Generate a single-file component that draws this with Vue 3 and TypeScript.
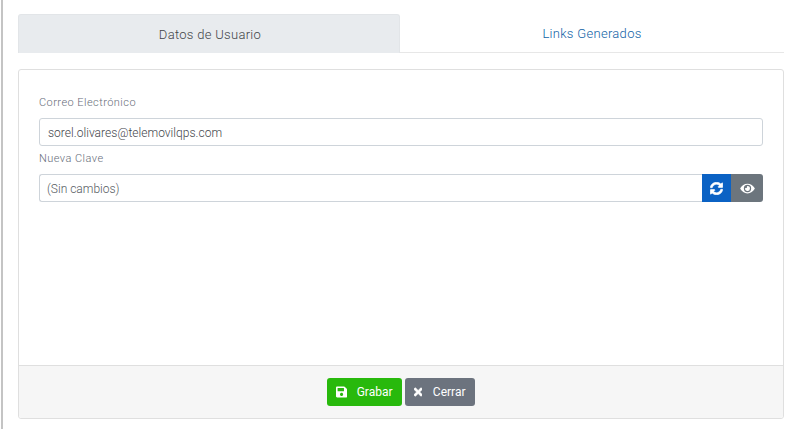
<script setup lang="ts">
const email = 'sorel.olivares@telemovilqps.com'
</script>

<template>
  <div class="page">
    <nav class="tabs">
      <a class="tab active">Datos de Usuario</a>
      <a class="tab link">Links Generados</a>
    </nav>
    <section class="card">
      <div class="body">
        <label class="label first">Correo Electrónico</label>
        <div class="input value">{{ email }}</div>
        <label class="label second">Nueva Clave</label>
        <div class="group">
          <div class="input placeholder">(Sin cambios)</div>
          <button class="addon blue" type="button" aria-label="Generar">
            <svg width="13" height="13" viewBox="0 0 512 512" fill="#fff" stroke="#fff" stroke-width="24"><path d="M370.7 133.3C339.5 104 298.9 88 255.800 88c-77.500.1-144.300 53.200-162.800 126.900-1.300 5.400-6.100 9.200-11.700 9.200H24.100c-7.500 0-13.200-6.800-11.800-14.200C33.900 94.900 134.800 8 256 8c66.400 0 126.800 26.100 171.300 68.700L463 41C478.100 25.900 504 36.600 504 57.900V192c0 13.300-10.700 24-24 24H345.900c-21.400 0-32.100-25.900-17-41l41.800-41.700zM32 296h134.100c21.400 0 32.100 25.900 17 41l-41.800 41.800c31.300 29.300 71.800 45.300 114.900 45.200 77.400-.1 144.300-53.100 162.800-126.800 1.300-5.400 6.100-9.200 11.700-9.200h57.300c7.500 0 13.200 6.800 11.800 14.200C478.100 417.100 377.200 504 256 504c-66.400 0-126.800-26.100-171.300-68.700L49 471C33.900 486.100 8 475.400 8 454.100V320c0-13.300 10.700-24 24-24z"/></svg>
          </button>
          <button class="addon gray" type="button" aria-label="Ver">
            <svg width="15" height="13" viewBox="0 0 576 512" fill="#fff"><path d="M572.500 241.400C518.300 135.600 410.900 64 288 64S57.700 135.600 3.500 241.400a32.400 32.400 0 0 0 0 29.200C57.700 376.400 165.100 448 288 448s230.300-71.600 284.500-177.400a32.400 32.400 0 0 0 0-29.200zM288 400a144 144 0 1 1 144-144 143.900 143.900 0 0 1-144 144zm0-240a95.300 95.300 0 0 0-25.300 3.800 47.900 47.900 0 0 1-66.900 66.900A95.800 95.800 0 1 0 288 160z"/></svg>
          </button>
        </div>
      </div>
      <footer class="foot">
        <button class="btn green" type="button">
          <svg width="12" height="14" viewBox="0 0 448 512" fill="#fff"><path d="M433.900 129.900l-83.900-83.900A48 48 0 0 0 316.100 32H48C21.500 32 0 53.500 0 80v352c0 26.500 21.500 48 48 48h352c26.500 0 48-21.500 48-48V163.900a48 48 0 0 0-14.100-34zM224 416c-35.300 0-64-28.700-64-64 0-35.300 28.700-64 64-64s64 28.700 64 64c0 35.300-28.700 64-64 64zm96-304.500V212c0 6.600-5.400 12-12 12H76c-6.600 0-12-5.400-12-12V108c0-6.600 5.400-12 12-12h228.500c3.200 0 6.200 1.300 8.500 3.500l3.500 3.500A12 12 0 0 1 320 111.500z"/></svg>
          <span>Grabar</span>
        </button>
        <button class="btn slate" type="button">
          <svg width="10" height="14" viewBox="0 0 352 512" fill="#fff" stroke="#fff" stroke-width="24"><path d="M242.700 256l100.100-100.100c12.300-12.300 12.300-32.200 0-44.500l-22.200-22.200c-12.300-12.300-32.200-12.300-44.500 0L176 189.300 75.900 89.200c-12.300-12.300-32.200-12.300-44.500 0L9.200 111.400c-12.300 12.300-12.300 32.200 0 44.500L109.300 256 9.200 356.100c-12.300 12.300-12.300 32.200 0 44.500l22.200 22.200c12.300 12.300 32.200 12.300 44.500 0L176 322.700l100.100 100.100c12.300 12.300 32.200 12.300 44.500 0l22.200-22.200c12.300-12.300 12.300-32.200 0-44.500L242.700 256z"/></svg>
          <span>Cerrar</span>
        </button>
      </footer>
    </section>
  </div>
</template>

<style>
html, body { margin: 0; background: #fff; }
</style>

<style scoped>
.page {
  box-sizing: border-box;
  width: 799px;
  height: 429px;
  margin-left: 1px;
  border-left: 2px solid #c4c4c4;
  padding: 14px 15px 0 15px;
  font-family: Roboto, "Liberation Sans", sans-serif;
  overflow: hidden;
}
.tabs {
  display: flex;
  height: 39px;
  box-sizing: border-box;
  width: 766px;
  border-bottom: 1px solid #e7e7e7;
}
.tab {
  height: 38px;
  display: flex;
  align-items: center;
  justify-content: center;
  font-size: 13px;
  font-weight: 300;
  letter-spacing: 0.3px;
}
.active {
  flex: 0 0 382px;
  padding-left: 2px;
  background: #e8ebee;
  color: #3f4448;
  border: 1px solid #e2e5e8;
  border-bottom: 0;
  border-radius: 3px 3px 0 0;
  height: 39px;
  box-sizing: border-box;
}
.link { flex: 1; color: #0f62a6; padding-top: 1px; box-sizing: border-box; }
.card {
  box-sizing: border-box;
  margin-top: 16px;
  width: 766px;
  height: 350px;
  border: 1px solid #dfdfdf;
  border-radius: 3px;
  display: flex;
  flex-direction: column;
}
.body {
  flex: 1;
  padding: 26px 20px 0;
}
.label {
  display: block;
  font-size: 11px;
  font-weight: 300;
  line-height: 14px;
  color: #666d79;
  letter-spacing: 0.45px;
}
.second { margin-top: 6px; }
.input {
  box-sizing: border-box;
  height: 28px;
  border: 1px solid #ced4da;
  border-radius: 3px;
  font-size: 12px;
  font-weight: 300;
  line-height: 28px;
  color: #3f454b;
}
.value { margin-top: 8px; padding-left: 8px; letter-spacing: 0.03px; }
.group { display: flex; margin-top: 8px; }
.placeholder {
  flex: 1;
  padding-left: 7px;
  border-right: 0;
  border-radius: 3px 0 0 3px;
  color: #565b61;
}
.addon {
  width: 30px;
  height: 28px;
  padding: 0;
  border: 0;
  display: flex;
  align-items: center;
  justify-content: center;
}
.blue { background: #0b62c4; width: 29px; }
.gray { background: #6c757d; width: 32px; border-radius: 0 3px 3px 0; }
.foot {
  height: 53px;
  box-sizing: border-box;
  background: #f6f6f6;
  border-top: 1px solid #dfdfdf;
  border-radius: 0 0 3px 3px;
  display: flex;
  justify-content: center;
  align-items: center;
  gap: 3px;
  padding-right: 1px;
}
.btn {
  height: 28px;
  border: 0;
  border-radius: 3px;
  color: #fff;
  font-family: inherit;
  font-size: 12px;
  display: flex;
  align-items: center;
  padding: 0 9px;
  gap: 10px;
}
.green { background: #28b90c; width: 75px; }
.slate { background: #6c737e; width: 70px; gap: 11px; }
</style>
